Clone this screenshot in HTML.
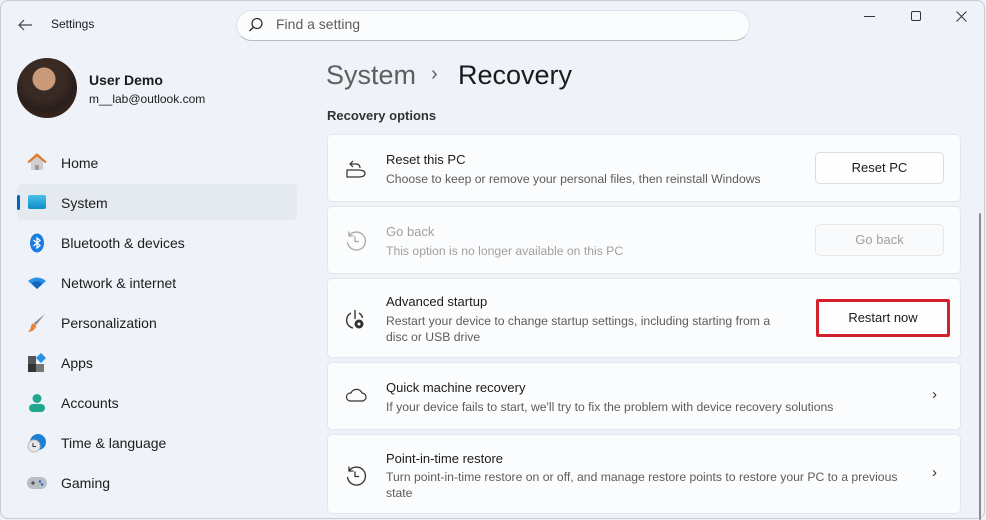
<!DOCTYPE html>
<html><head><meta charset="utf-8"><style>
*{box-sizing:border-box;margin:0;padding:0}
body{width:986px;height:520px;overflow:hidden;background:#eef2f8;font-family:"Segoe UI","Liberation Sans",sans-serif;color:#1b1b1b;position:relative}
.win{position:absolute;left:0;top:0;width:985px;height:519px;border:1px solid #c9ccd1;border-radius:8px;background:#eff3f9}
.abs{position:absolute}
.t{font-size:13px}
.nav{position:absolute;left:61px;font-size:14px;color:#1b1b1b}
.ic{position:absolute;left:27px;width:20px;height:20px}
.card{position:absolute;left:327px;width:634px;background:#fbfcfd;border:1px solid #e4e6ea;border-radius:5px}
.card .h{position:absolute;left:58px;font-size:13px}
.card .s{position:absolute;left:58px;font-size:12.2px;color:#5c5c5c;line-height:16px}
.btn{position:absolute;left:487px;width:129px;height:32px;background:#fefefe;border:1px solid #dcdcdc;border-radius:5px;font-size:13px;text-align:center;line-height:30px}
.chev{position:absolute;left:604px;font-size:15px;color:#333}
</style></head><body>
<div class="win"></div>
<svg class="abs" style="left:17px;top:18px" width="16" height="14"><path d="M7 2L2 7L7 12M2 7H15" stroke="#444" stroke-width="1.2" fill="none"/></svg>
<div class="abs t" style="left:51px;top:17px;font-size:12px">Settings</div>
<div class="abs" style="left:236px;top:10px;width:514px;height:31px;border:1px solid #dfe1e5;border-bottom-color:#b8bbbf;border-radius:16px;background:#fbfcfd"></div>
<svg class="abs" style="left:248px;top:17px" width="16" height="16"><circle cx="9" cy="6.5" r="5" stroke="#333" stroke-width="1.3" fill="none"/><path d="M5.5 10L1.5 14" stroke="#333" stroke-width="1.4"/></svg>
<div class="abs" style="left:276px;top:16px;font-size:14px;color:#5d5d5d">Find a setting</div>
<div class="abs" style="left:864px;top:16px;width:11px;border-top:1px solid #333"></div>
<div class="abs" style="left:911px;top:11px;width:10px;height:10px;border:1px solid #333;border-radius:2px"></div>
<svg class="abs" style="left:956px;top:11px" width="11" height="11"><path d="M0.5 0.5L10.5 10.5M10.5 0.5L0.5 10.5" stroke="#333" stroke-width="1"/></svg>

<div class="abs" style="left:17px;top:58px;width:60px;height:60px;border-radius:50%;background:radial-gradient(circle at 45% 35%,#c99a78 0 22%,#3a2a24 23% 40%,#2a1f1c 60%,#4a2a20)"></div>
<div class="abs" style="left:89px;top:72px;font-size:14px;font-weight:bold">User Demo</div>
<div class="abs" style="left:89px;top:92px;font-size:12px">m__lab@outlook.com</div>

<svg class="ic" style="top:152px" viewBox="0 0 20 20"><path d="M2 10L10 3L18 10" fill="#e8853a"/><path d="M4 9.5V18H16V9.5L10 4.5Z" fill="#cfcfcf"/><rect x="8" y="13" width="4" height="5" fill="#9a9a9a"/><path d="M1 10.5L10 2.5L19 10.5" stroke="#e07a2e" stroke-width="2" fill="none"/></svg>
<div class="nav" style="top:155px">Home</div>
<div class="abs" style="left:17px;top:184px;width:280px;height:36px;background:#e5e9f0;border-radius:5px"></div>
<div class="abs" style="left:17px;top:195px;width:3px;height:15px;background:#0067c0;border-radius:2px"></div>
<div class="ic" style="top:195px;height:14px;background:linear-gradient(#4cc1ea,#0f8bc7);border-radius:2px;left:28px;width:18px"></div>
<div class="nav" style="top:195px">System</div>
<svg class="ic" style="top:233px" viewBox="0 0 20 20"><ellipse cx="10" cy="10" rx="7" ry="9.5" fill="#1a7de0"/><path d="M6.5 7L13 12.5L10 15V5L13 7.5L6.5 13" stroke="#fff" stroke-width="1.3" fill="none"/></svg>
<div class="nav" style="top:235px">Bluetooth &amp; devices</div>
<svg class="ic" style="top:273px" viewBox="0 0 20 20"><path d="M1 8Q10 1 19 8L10 16Z" fill="#2592e8"/><path d="M4.5 10.5Q10 6 15.5 10.5L10 16Z" fill="#1565c0"/></svg>
<div class="nav" style="top:275px">Network &amp; internet</div>
<svg class="ic" style="top:313px" viewBox="0 0 20 20"><path d="M18 1L9 12L7 10Z" fill="#8a8a8a"/><path d="M7 10.5L9.5 13Q7 19 1 19Q4 16 4 13Q5 10 7 10.5Z" fill="#e8853a"/></svg>
<div class="nav" style="top:315px">Personalization</div>
<svg class="ic" style="top:353px" viewBox="0 0 20 20"><rect x="1" y="3" width="8" height="8" fill="#555"/><rect x="1" y="11" width="8" height="8" fill="#333"/><rect x="9" y="11" width="8" height="8" fill="#777"/><path d="M14 0L19 5L14 10L9 5Z" fill="#2592e8"/></svg>
<div class="nav" style="top:355px">Apps</div>
<svg class="ic" style="top:393px" viewBox="0 0 20 20"><circle cx="10" cy="5.5" r="4.5" fill="#1fa890"/><rect x="2" y="11" width="16" height="8" rx="4" fill="#1fa890"/></svg>
<div class="nav" style="top:395px">Accounts</div>
<svg class="ic" style="top:433px" viewBox="0 0 20 20"><circle cx="11" cy="9" r="8" fill="#1c7fd6"/><circle cx="7" cy="13" r="6" fill="#e8e8e8" stroke="#bbb"/><path d="M6 10V13.5H9" stroke="#333" fill="none"/></svg>
<div class="nav" style="top:435px">Time &amp; language</div>
<svg class="ic" style="top:473px" viewBox="0 0 20 20"><rect x="0" y="4" width="20" height="12" rx="6" fill="#b8bec6"/><path d="M4 10H8M6 8V12" stroke="#333"/><circle cx="13" cy="8.5" r="1.2" fill="#2a60b0"/><circle cx="15" cy="11.5" r="1.2" fill="#2a60b0"/></svg>
<div class="nav" style="top:475px">Gaming</div>

<div class="abs" style="left:326px;top:60px;font-size:27px;color:#5e5e5e">System</div>
<div class="abs" style="left:431px;top:63px;font-size:20px;color:#5e5e5e">›</div>
<div class="abs" style="left:458px;top:60px;font-size:27px;color:#1b1b1b">Recovery</div>
<div class="abs" style="left:327px;top:108px;font-size:13px;font-weight:bold;color:#333">Recovery options</div>

<div class="card" style="top:134px;height:68px">
<svg class="abs" style="left:18px;top:23px" width="20" height="20"><path d="M1 12H12Q19 12 19 15.5Q19 19 12 19H1Z" stroke="#333" stroke-width="1.2" fill="none"/><path d="M7 3L4 6L7 9M4 6H10Q14 6 14 10" stroke="#333" stroke-width="1.2" fill="none"/></svg>
<div class="h" style="top:17px">Reset this PC</div>
<div class="s" style="top:36px">Choose to keep or remove your personal files, then reinstall Windows</div>
<div class="btn" style="top:17px">Reset PC</div></div>
<div class="card" style="top:206px;height:68px">
<svg class="abs" style="left:17px;top:23px" width="22" height="22"><path d="M4 6A9 9 0 1 1 2.5 12M4 1.5V6H8.5" stroke="#aaa" stroke-width="1.3" fill="none"/><path d="M10 6.5V11.5H14" stroke="#aaa" stroke-width="1.3" fill="none"/></svg>
<div class="h" style="top:17px;color:#a0a0a0">Go back</div>
<div class="s" style="top:36px;color:#a0a0a0">This option is no longer available on this PC</div>
<div class="btn" style="top:17px;color:#a0a0a0;background:#f9fafb;border-color:#e8e8e8">Go back</div></div>
<div class="card" style="top:278px;height:80px">
<svg class="abs" style="left:17px;top:30px" width="22" height="22"><path d="M6 4A8 8 0 0 0 8 19M14 4Q17 6 17.5 9" stroke="#333" stroke-width="1.4" fill="none"/><path d="M10 1V10" stroke="#333" stroke-width="1.4"/><circle cx="14" cy="15" r="4.5" fill="#333"/><circle cx="14" cy="15" r="1.5" fill="#fff"/></svg>
<div class="h" style="top:15px">Advanced startup</div>
<div class="s" style="top:34px">Restart your device to change startup settings, including starting from a<br>disc or USB drive</div>
<div class="btn" style="top:20px;left:488px;width:134px;height:38px;border:3px solid #d4202d;border-radius:2px;line-height:32px">Restart now</div></div>
<div class="card" style="top:362px;height:68px">
<svg class="abs" style="left:17px;top:24px" width="22" height="16"><path d="M5 14H17A4 4 0 0 0 17 6A6 6 0 0 0 6 6A4 4 0 0 0 5 14Z" stroke="#333" stroke-width="1.2" fill="none"/></svg>
<div class="h" style="top:17px">Quick machine recovery</div>
<div class="s" style="top:36px">If your device fails to start, we'll try to fix the problem with device recovery solutions</div>
<div class="chev" style="top:23px">›</div></div>
<div class="card" style="top:434px;height:80px">
<svg class="abs" style="left:17px;top:30px" width="22" height="22"><path d="M4 6A9 9 0 1 1 2.5 12M4 1.5V6H8.5" stroke="#333" stroke-width="1.3" fill="none"/><path d="M10 6.5V11.5H14" stroke="#333" stroke-width="1.3" fill="none"/></svg>
<div class="h" style="top:16px">Point-in-time restore</div>
<div class="s" style="top:34px">Turn point-in-time restore on or off, and manage restore points to restore your PC to a previous<br>state</div>
<div class="chev" style="top:29px">›</div></div>
<div class="abs" style="left:979px;top:213px;width:2px;height:307px;background:#8a8a8a;border-radius:1px"></div>
</body></html>
